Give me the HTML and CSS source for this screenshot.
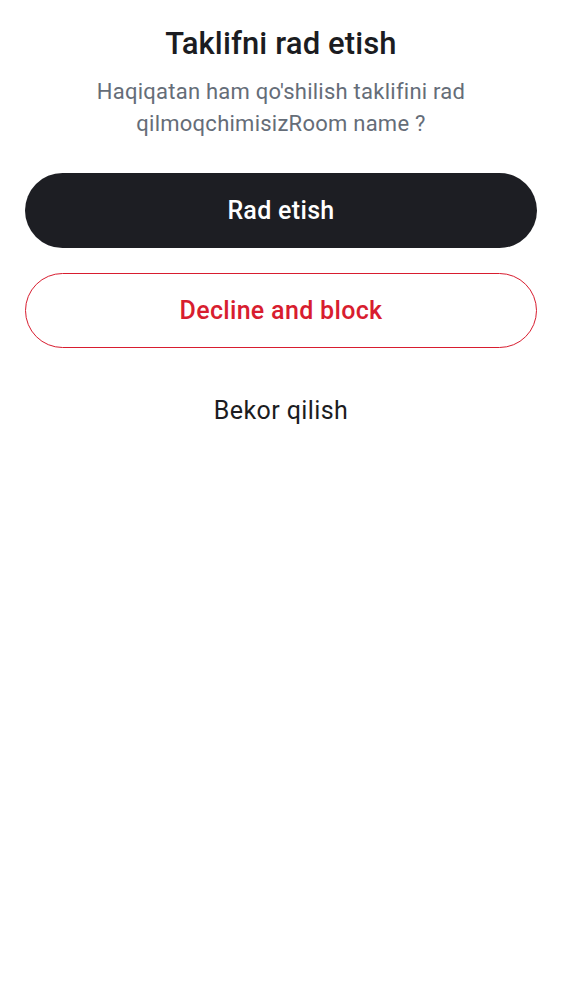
FILE: index.html
```html
<!DOCTYPE html>
<html>
<head>
<meta charset="utf-8">
<link rel="stylesheet" href="styles.css">
</head>
<body>
<div class="sheet">
  <h1 class="title">Taklifni rad etish</h1>
  <p class="message">Haqiqatan ham qo'shilish taklifini rad qilmoqchimisizRoom name ?</p>
  <div class="actions">
    <button class="btn btn-primary">Rad etish</button>
    <button class="btn btn-danger">Decline and block</button>
    <button class="btn btn-text">Bekor qilish</button>
  </div>
</div>
</body>
</html>
```
FILE: styles.css
```css
html, body {
  margin: 0;
  padding: 0;
  background: #ffffff;
}
body {
  font-family: Roboto, "Noto Sans", sans-serif;
}
.sheet {
  padding: 24px 25px 0;
  display: flex;
  flex-direction: column;
  align-items: stretch;
}
.title {
  margin: 0;
  text-align: center;
  font-family: "Roboto Medium", Roboto, sans-serif;
  font-size: 31px;
  font-weight: 500;
  line-height: 40px;
  color: #1b1c21;
  letter-spacing: 0.1px;
}
.message {
  margin: 12px 30px 0;
  text-align: center;
  font-size: 22px;
  line-height: 32px;
  color: #656d78;
  letter-spacing: 0.25px;
}
.actions {
  margin-top: 33px;
  display: flex;
  flex-direction: column;
  gap: 25px;
}
.btn {
  height: 75px;
  border-radius: 38px;
  font-family: "Roboto Medium", Roboto, sans-serif;
  font-size: 25px;
  font-weight: 500;
  letter-spacing: 0.3px;
  border: 1px solid transparent;
  background: transparent;
  padding: 0;
  width: 100%;
}
.btn-primary {
  background: #1d1e23;
  color: #ffffff;
}
.btn-danger {
  border-color: #d81d2f;
  color: #d81d2f;
}
.btn-text {
  font-family: Roboto, sans-serif;
  color: #1b1c21;
  font-weight: 400;
  letter-spacing: 0.4px;
}
```
